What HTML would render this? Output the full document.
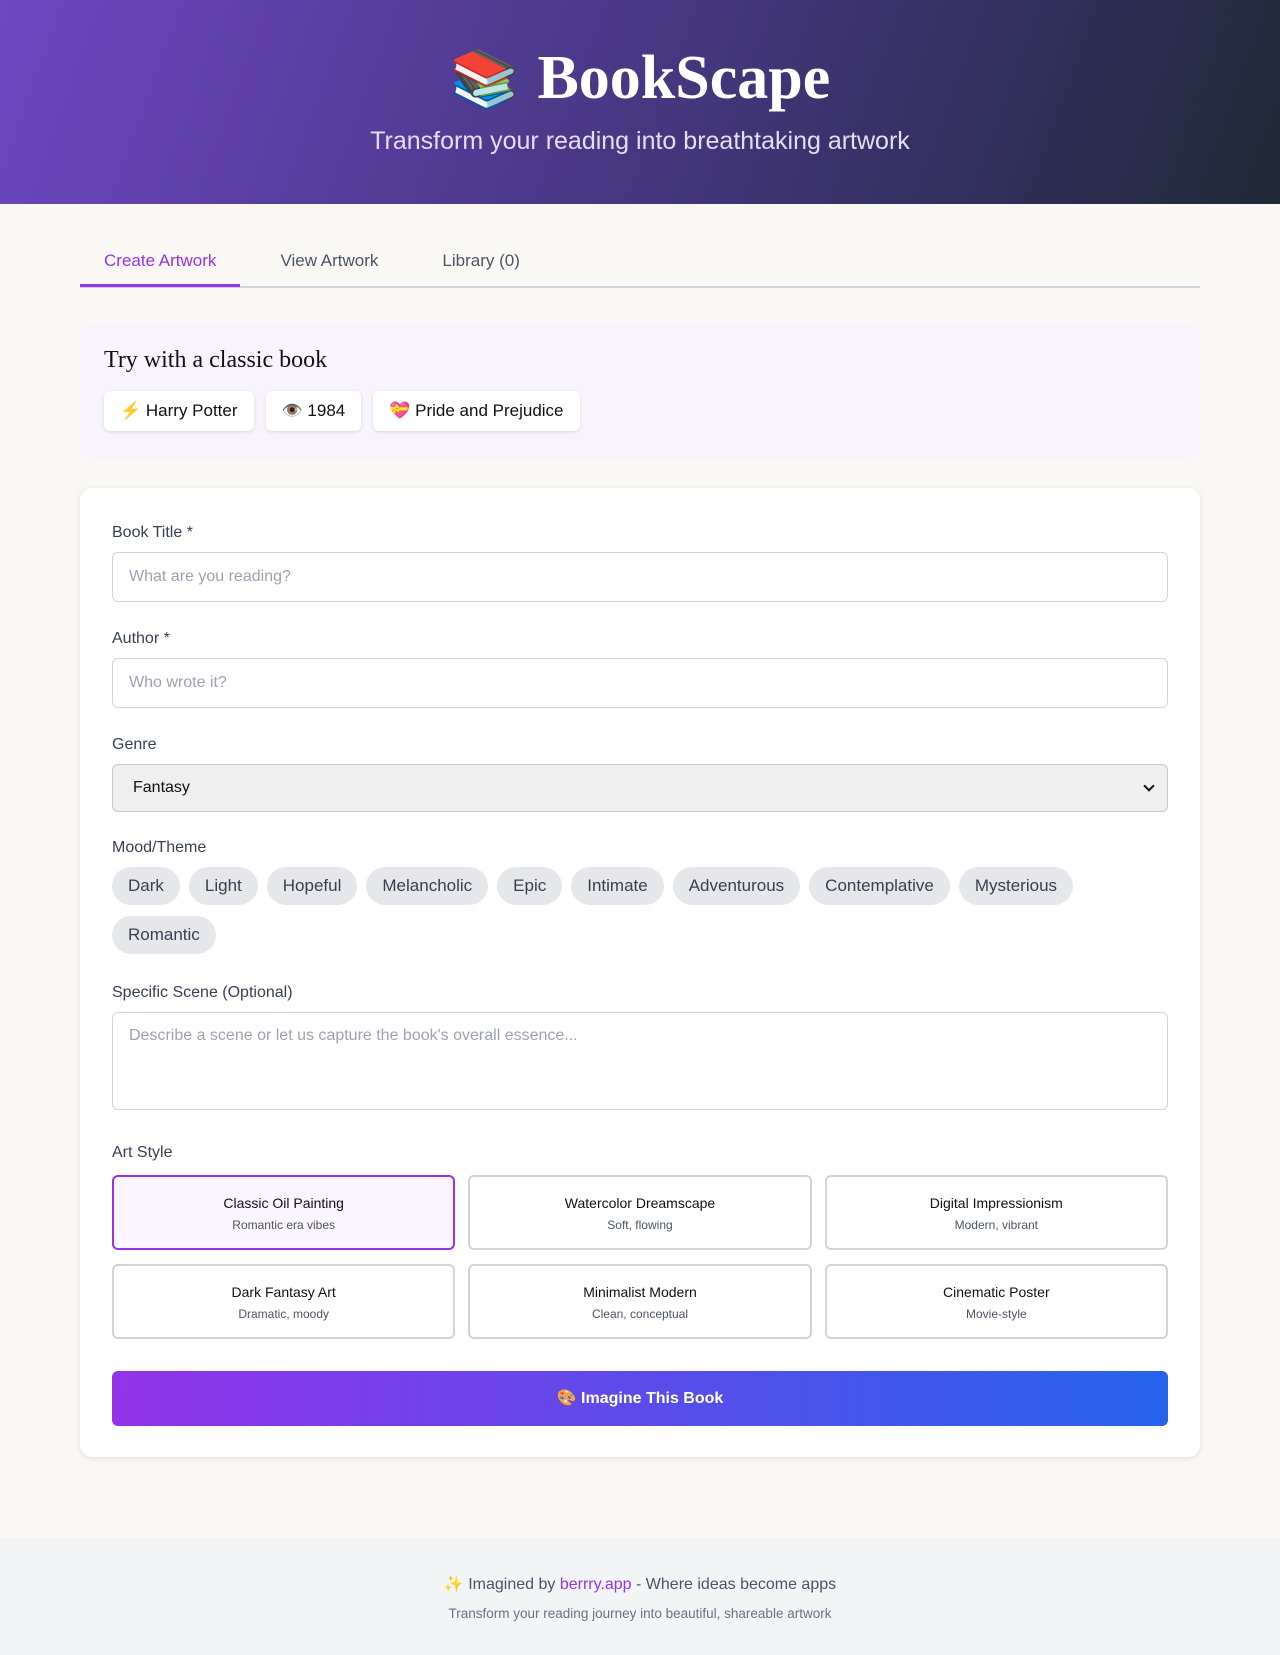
<!DOCTYPE html>
<html><head><meta charset="utf-8"><style>
*{box-sizing:border-box;margin:0;padding:0}
body{width:1280px;height:1655px;background:#faf8f5;font-family:"Liberation Sans","Noto Sans CJK JP",sans-serif;color:#374151;overflow:hidden;position:relative}
header{height:204px;background:linear-gradient(110deg,#6d47c2 0%,#4f3a8f 40%,#33305f 75%,#1f2937 100%);text-align:center;color:#fff}
header h1{font-family:"Liberation Serif",serif;font-size:62px;font-weight:bold;padding-top:42px;line-height:72px}
header h1 .ic{font-family:"Noto Color Emoji",sans-serif;font-size:56px;margin-right:18px}
header p{font-size:25px;color:#e5dcf5;margin-top:12px}
.wrap{width:1120px;margin:0 auto}
.tabs{margin-top:36px;border-bottom:2px solid #d1d5db;height:48px;display:flex}
.tab{font-size:17px;padding:8px 24px 0;line-height:26px;color:#4b5563}
.tab.a{color:#9333ea;border-bottom:3px solid #9333ea;height:47px}
.try{margin-top:34px;background:#f8f3fd;border-radius:12px;height:136px;padding:25px 24px}
.try h2{font-family:"Liberation Serif",serif;font-weight:normal;font-size:24px;color:#111}
.bs{display:flex;gap:12px;margin-top:17px}
.b{background:#fff;border-radius:6px;height:40px;padding:0 16px;line-height:40px;font-size:17px;color:#111;box-shadow:0 1px 3px rgba(0,0,0,.12)}
.card{margin-top:30px;background:#fff;border-radius:12px;box-shadow:0 1px 6px rgba(0,0,0,.1);padding:36px 32px 31px}
label{display:block;font-size:16px;color:#374151;margin-bottom:10px}
.in{height:50px;border:1px solid #d1d5db;border-radius:6px;padding:0 16px;line-height:48px;color:#9ca3af;font-size:16px;margin-bottom:28px}
.sel{height:48px;background:#efefef;border:1px solid #c9c9c9;border-radius:6px;padding:0 20px;line-height:46px;font-size:16px;color:#111;position:relative;margin-bottom:27px}
.sel:after{content:"";position:absolute;right:14px;top:17px;width:6px;height:6px;border-right:2px solid #111;border-bottom:2px solid #111;transform:rotate(45deg)}
.chips{display:flex;flex-wrap:wrap;gap:11px 9px;margin-bottom:30px}
.chip{background:#e5e7eb;border-radius:20px;height:38px;line-height:38px;padding:0 16px;font-size:17px;color:#374151}
.ta{height:98px;border:1px solid #d1d5db;border-radius:6px;padding:14px 16px;color:#9ca3af;font-size:16px;margin-bottom:34px}
.grid{display:grid;grid-template-columns:repeat(3,1fr);gap:14px 13px}
.g{height:75px;border:2px solid #d1d5db;border-radius:6px;text-align:center;padding-top:18px}
.g b{display:block;font-weight:normal;font-size:14px;color:#111}
.g span{display:block;font-size:12px;color:#4b5563;margin-top:7px}
.g.s{border-color:#9333ea;background:#faf5ff}
.go{margin-top:32px;height:55px;border-radius:6px;background:linear-gradient(90deg,#9333ea,#2563eb);color:#fff;text-align:center;line-height:55px;font-weight:bold;font-size:16px}
footer{position:absolute;top:1538px;left:0;width:1280px;height:117px;background:#f3f4f6;text-align:center}
footer p{font-size:16px;color:#4b5563;margin-top:36px}
footer p a{color:#9333ea;text-decoration:none}
footer small{display:block;font-size:13.5px;color:#6b7280;margin-top:12px}
</style></head><body>
<header><h1><span class="ic">📚</span>BookScape</h1><p>Transform your reading into breathtaking artwork</p></header>
<div class="wrap">
<div class="tabs"><div class="tab a">Create Artwork</div><div class="tab" style="padding-left:40px">View Artwork</div><div class="tab" style="padding-left:40px">Library (0)</div></div>
<div class="try"><h2>Try with a classic book</h2><div class="bs"><div class="b">⚡ Harry Potter</div><div class="b">👁️ 1984</div><div class="b">💝 Pride and Prejudice</div></div></div>
<div class="card">
<label>Book Title *</label><div class="in">What are you reading?</div>
<label>Author *</label><div class="in">Who wrote it?</div>
<label>Genre</label><div class="sel">Fantasy</div>
<label>Mood/Theme</label>
<div class="chips"><div class="chip">Dark</div><div class="chip">Light</div><div class="chip">Hopeful</div><div class="chip">Melancholic</div><div class="chip">Epic</div><div class="chip">Intimate</div><div class="chip">Adventurous</div><div class="chip">Contemplative</div><div class="chip">Mysterious</div><div class="chip">Romantic</div></div>
<label>Specific Scene (Optional)</label><div class="ta">Describe a scene or let us capture the book's overall essence...</div>
<label style="margin-bottom:13px">Art Style</label>
<div class="grid">
<div class="g s"><b>Classic Oil Painting</b><span>Romantic era vibes</span></div>
<div class="g"><b>Watercolor Dreamscape</b><span>Soft, flowing</span></div>
<div class="g"><b>Digital Impressionism</b><span>Modern, vibrant</span></div>
<div class="g"><b>Dark Fantasy Art</b><span>Dramatic, moody</span></div>
<div class="g"><b>Minimalist Modern</b><span>Clean, conceptual</span></div>
<div class="g"><b>Cinematic Poster</b><span>Movie-style</span></div>
</div>
<div class="go">🎨 Imagine This Book</div>
</div>
</div>
<footer><p>✨ Imagined by <a>berrry.app</a> - Where ideas become apps</p><small>Transform your reading journey into beautiful, shareable artwork</small></footer>
</body></html>
